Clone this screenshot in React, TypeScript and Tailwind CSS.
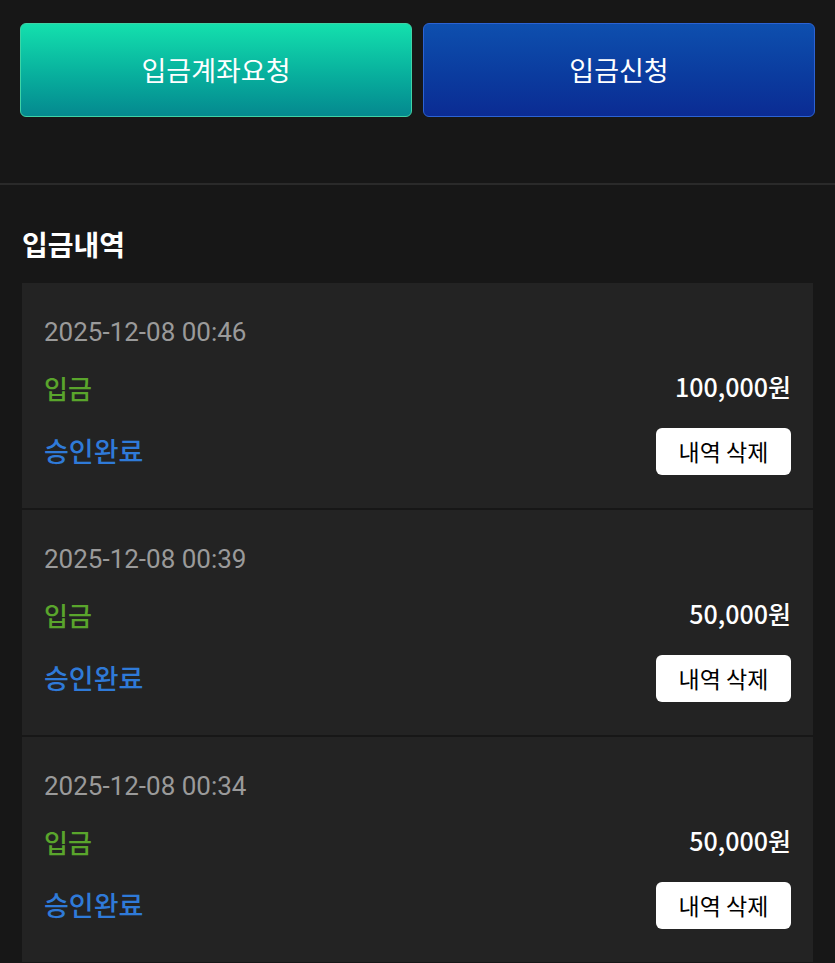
import React from 'react'

const history = [
  { date: '2025-12-08 00:46', amount: '100,000원' },
  { date: '2025-12-08 00:39', amount: '50,000원' },
  { date: '2025-12-08 00:34', amount: '50,000원' },
]

const kr = "font-['Noto_Sans_CJK_KR','Noto_Sans',sans-serif]"

export default function App() {
  return (
    <div className={`min-h-[963px] w-[835px] bg-[#171717] overflow-hidden ${kr}`}>
      {/* Top action buttons */}
      <div className="flex gap-[11px] px-[20px] pt-[23px]">
        <button className="flex-1 h-[94px] rounded-[6px] border border-[#3fd3a6] bg-gradient-to-b from-[#14e0ad] to-[#05898f] text-white text-[27px] font-normal">
          입금계좌요청
        </button>
        <button className="flex-1 h-[94px] rounded-[6px] border border-[#2c63d4] bg-gradient-to-b from-[#0e4fae] to-[#0b2b93] text-white text-[27px] font-normal">
          입금신청
        </button>
      </div>

      <div className="mt-[66px] h-[2px] bg-[#2a2a2a]" />

      {/* History */}
      <div className="px-[22px]">
        <h2 className="pt-[42px] h-[98px] text-[28px] leading-[35px] font-bold text-white">입금내역</h2>
        <div className="flex flex-col gap-[2px]">
          {history.map((item) => (
            <div key={item.date} className="bg-[#232323] px-[22px] pt-[33px] pb-[33px]">
              <div className="h-[32px] leading-[32px] text-[26px] text-[#9a9a9a] font-['Roboto',sans-serif]">
                {item.date}
              </div>
              <div className="mt-[19px] h-[40px] flex items-center justify-between">
                <span className="text-[26px] text-[#5aa52c] font-medium">입금</span>
                <span className="text-[25px] text-white font-medium">{item.amount}</span>
              </div>
              <div className="mt-[21px] h-[47px] flex items-center justify-between">
                <span className="text-[27px] text-[#2f7ad8] font-medium">승인완료</span>
                <button className="h-[47px] w-[135px] rounded-[6px] bg-white text-black text-[23px]">
                  내역 삭제
                </button>
              </div>
            </div>
          ))}
        </div>
      </div>
    </div>
  )
}
